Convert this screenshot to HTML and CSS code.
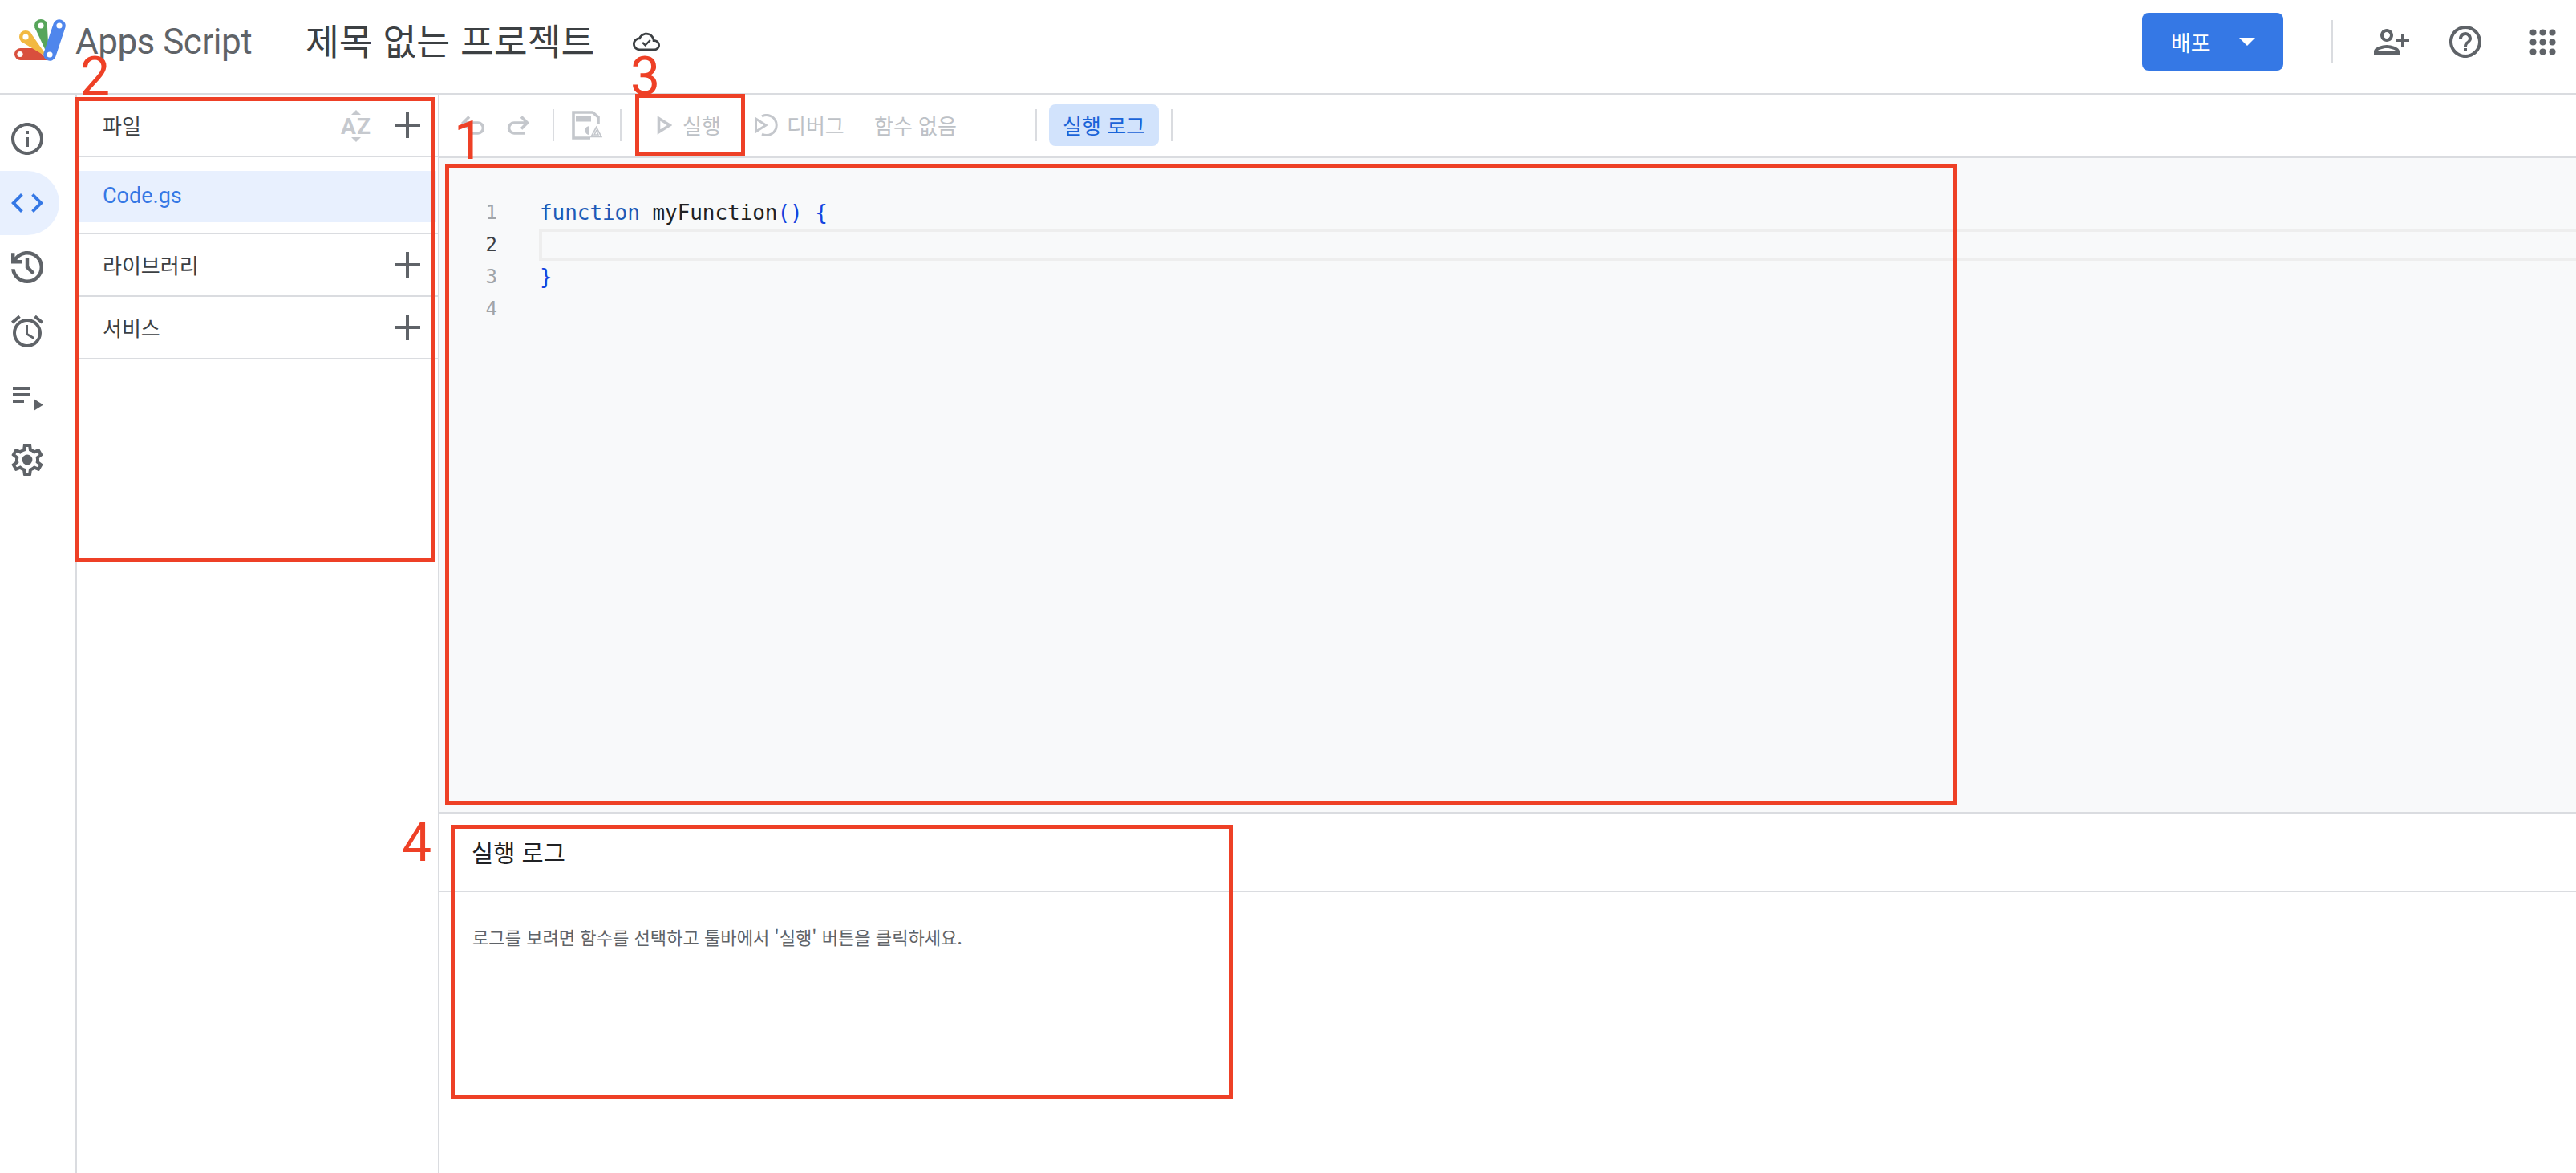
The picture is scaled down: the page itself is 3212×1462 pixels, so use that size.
FILE: index.html
```html
<!DOCTYPE html>
<html lang="ko">
<head>
<meta charset="utf-8">
<title>Apps Script</title>
<link rel="stylesheet" href="styles.css">
</head>
<body>
<div class="app">
  <header class="topbar">
    <svg class="logo" viewBox="18 24 64 52" aria-hidden="true">
      <circle cx="25.5" cy="67.5" r="7.5" fill="#d94f3d"/><polygon points="25.5,60 45,60 60,75 25.5,75" fill="#d94f3d"/>
      <circle cx="32" cy="46" r="8" fill="#f2b942"/><polygon points="26.3,51.7 37.7,40.3 60,72" fill="#f2b942"/>
      <circle cx="51" cy="32" r="8" fill="#57a55a"/><polygon points="43.2,33.8 58.8,30.2 61,72" fill="#57a55a"/>
      <line x1="74" y1="32" x2="62" y2="68" stroke="#4f86ec" stroke-width="15.5" stroke-linecap="round"/>
      <circle cx="25" cy="67.5" r="3.6" fill="#fff"/><circle cx="32" cy="46" r="3.6" fill="#fff"/><circle cx="51" cy="32" r="3.6" fill="#fff"/><circle cx="74" cy="32" r="3.6" fill="#fff"/><circle cx="62" cy="68" r="3.6" fill="#fff"/>
    </svg>
    <span class="brand">Apps Script</span>
    <span class="title">제목 없는 프로젝트</span>
    <svg class="cloud" viewBox="0 0 24 24" aria-hidden="true"><path class="fill" d="M19.35 10.04C18.67 6.59 15.64 4 12 4 9.11 4 6.6 5.64 5.35 8.04 2.34 8.36 0 10.91 0 14c0 3.31 2.69 6 6 6h13c2.76 0 5-2.24 5-5 0-2.64-2.05-4.78-4.65-4.96zM19 18H6c-2.21 0-4-1.79-4-4s1.79-4 4-4h.71C7.37 7.69 9.48 6 12 6c3.04 0 5.5 2.46 5.5 5.5v.5H19c1.66 0 3 1.34 3 3s-1.34 3-3 3z"/><path class="check" d="M8.6 12.6l2.4 2.4 4.4-4.4"/></svg>
    <div class="topbar-right">
      <button class="deploy"><span>배포</span><i class="caret"></i></button>
      <i class="top-sep"></i>
      <svg class="ic48 add-user" viewBox="0 0 24 24" aria-hidden="true"><path class="fill" d="M15 12c2.21 0 4-1.79 4-4s-1.79-4-4-4-4 1.79-4 4 1.79 4 4 4zm0-6c1.1 0 2 .9 2 2s-.9 2-2 2-2-.9-2-2 .9-2 2-2zm0 8c-2.67 0-8 1.34-8 4v2h16v-2c0-2.66-5.33-4-8-4zm-6 4c.22-.72 3.31-2 6-2 2.7 0 5.8 1.29 6 2H9zm-3-3v-3h3v-2H6V7H4v3H1v2h3v3h2z"/></svg>
      <svg class="ic48 help" viewBox="0 0 24 24" aria-hidden="true"><path class="fill" d="M11 18h2v-2h-2v2zm1-16C6.48 2 2 6.48 2 12s4.48 10 10 10 10-4.48 10-10S17.52 2 12 2zm0 18c-4.41 0-8-3.59-8-8s3.59-8 8-8 8 3.59 8 8-3.59 8-8 8zm0-14c-2.21 0-4 1.79-4 4h2c0-1.1.9-2 2-2s2 .9 2 2c0 2-3 1.75-3 5h2c0-2.25 3-2.5 3-5 0-2.21-1.79-4-4-4z"/></svg>
      <svg class="grid-ic" viewBox="0 0 33 33" aria-hidden="true"><g class="fill"><circle cx="4.5" cy="4.5" r="4"/><circle cx="16.5" cy="4.5" r="4"/><circle cx="28.5" cy="4.5" r="4"/><circle cx="4.5" cy="16.5" r="4"/><circle cx="16.5" cy="16.5" r="4"/><circle cx="28.5" cy="16.5" r="4"/><circle cx="4.5" cy="28.5" r="4"/><circle cx="16.5" cy="28.5" r="4"/><circle cx="28.5" cy="28.5" r="4"/></g></svg>
    </div>
  </header>

  <div class="body">
    <nav class="rail">
      <div class="rail-item"><svg class="ic48" viewBox="0 0 24 24" aria-hidden="true"><path class="fill" d="M11 7h2v2h-2zm0 4h2v6h-2zm1-9C6.48 2 2 6.48 2 12s4.48 10 10 10 10-4.48 10-10S17.52 2 12 2zm0 18c-4.41 0-8-3.59-8-8s3.59-8 8-8 8 3.59 8 8-3.59 8-8 8z"/></svg></div>
      <div class="rail-item is-active"><svg class="ic48" viewBox="0 0 24 24" aria-hidden="true"><path d="M9.4 16.6L4.8 12l4.6-4.6L8 6l-6 6 6 6 1.4-1.4zm5.2 0l4.6-4.6-4.6-4.6L16 6l6 6-6 6-1.4-1.4z"/></svg></div>
      <div class="rail-item"><svg class="ic40" viewBox="3 3 18 18" aria-hidden="true"><path class="fill" d="M12 21c-2.3 0-4.3-.76-6.03-2.29C4.24 17.18 3.25 15.27 3.05 13h2.05c.23 1.73 1 3.16 2.31 4.3C8.7 18.43 10.23 19 12 19c1.95 0 3.6-.68 4.96-2.04C18.32 15.6 19 13.95 19 12s-.68-3.6-2.04-4.96C15.6 5.68 13.95 5 12 5c-1.15 0-2.23.27-3.23.8-1 .53-1.85 1.27-2.52 2.2H9v2H3V4h2v2.35c.85-1.07 1.89-1.9 3.11-2.48C9.33 3.29 10.63 3 12 3c2.5 0 4.63.87 6.37 2.63C20.13 7.37 21 9.5 21 12s-.87 4.63-2.63 6.37C16.63 20.13 14.5 21 12 21zm2.8-4.8L11 12.4V7h2v4.6l3.2 3.2-1.4 1.4z"/></svg></div>
      <div class="rail-item"><svg class="ic48" viewBox="0 0 24 24" aria-hidden="true"><path class="fill" d="M22 5.72l-4.6-3.86-1.29 1.53 4.6 3.86L22 5.72zM7.88 3.39L6.6 1.86 2 5.71l1.29 1.53 4.59-3.85zM12.5 8H11v6l4.75 2.85.75-1.23-4-2.37V8zM12 4c-4.97 0-9 4.03-9 9s4.03 9 9 9 9-4.03 9-9-4.03-9-9-9zm0 16c-3.87 0-7-3.13-7-7s3.13-7 7-7 7 3.13 7 7-3.13 7-7 7z"/></svg></div>
      <div class="rail-item"><svg class="ic40" viewBox="0 0 40 40" aria-hidden="true"><g class="fill"><rect x="2" y="9" width="22" height="4"/><rect x="2" y="17" width="22" height="4"/><rect x="2" y="25" width="14" height="4"/><polygon points="28,24 40,31.5 28,39"/></g></svg></div>
      <div class="rail-item"><svg class="ic48" viewBox="0 0 24 24" aria-hidden="true"><path class="fill" d="M19.43 12.98c.04-.32.07-.64.07-.98 0-.34-.03-.66-.07-.98l2.11-1.65c.19-.15.24-.42.12-.64l-2-3.46c-.09-.16-.26-.25-.44-.25-.06 0-.12.01-.17.03l-2.49 1c-.52-.4-1.08-.73-1.69-.98l-.38-2.65C14.46 2.18 14.25 2 14 2h-4c-.25 0-.46.18-.49.42l-.38 2.65c-.61.25-1.17.59-1.69.98l-2.49-1c-.06-.02-.12-.03-.18-.03-.17 0-.34.09-.43.25l-2 3.46c-.13.22-.07.49.12.64l2.11 1.65c-.04.32-.07.65-.07.98 0 .33.03.66.07.98l-2.11 1.65c-.19.15-.24.42-.12.64l2 3.46c.09.16.26.25.44.25.06 0 .12-.01.17-.03l2.49-1c.52.4 1.08.73 1.69.98l.38 2.65c.03.24.24.42.49.42h4c.25 0 .46-.18.49-.42l.38-2.65c.61-.25 1.17-.59 1.69-.98l2.49 1c.06.02.12.03.18.03.17 0 .34-.09.43-.25l2-3.46c.12-.22.07-.49-.12-.64l-2.11-1.65zm-1.98-1.71c.04.31.05.52.05.73 0 .21-.02.43-.05.73l-.14 1.13.89.7 1.08.84-.7 1.21-1.27-.51-1.04-.42-.9.68c-.43.32-.84.56-1.25.73l-1.06.43-.16 1.13-.2 1.35h-1.4l-.19-1.35-.16-1.13-1.06-.43c-.43-.18-.83-.41-1.23-.71l-.91-.7-1.06.43-1.27.51-.7-1.21 1.08-.84.89-.7-.14-1.13c-.03-.31-.05-.54-.05-.74s.02-.43.05-.73l.14-1.13-.89-.7-1.08-.84.7-1.21 1.27.51 1.04.42.9-.68c.43-.32.84-.56 1.25-.73l1.06-.43.16-1.13.2-1.35h1.39l.19 1.35.16 1.13 1.06.43c.43.18.83.41 1.23.71l.91.7 1.06-.43 1.27-.51.7 1.21-1.07.85-.89.7.14 1.13z"/><circle class="fill" cx="12" cy="12" r="3.2"/></svg></div>
    </nav>

    <aside class="files">
      <div class="files-head">
        <span class="files-label">파일</span>
        <svg class="az" viewBox="0 0 40 40" aria-hidden="true"><polygon points="20,0 26,6 14,6"/><polygon points="20,40 26,34 14,34"/><text x="20" y="30" text-anchor="middle">AZ</text></svg>
        <svg class="plus" viewBox="0 0 32 32" aria-hidden="true"><path d="M14 0h4v14h14v4H18v14h-4V18H0v-4h14z"/></svg>
      </div>
      <div class="file-list"><div class="file-row">Code.gs</div></div>
      <div class="files-section">
        <span class="files-label">라이브러리</span>
        <svg class="plus" viewBox="0 0 32 32" aria-hidden="true"><path d="M14 0h4v14h14v4H18v14h-4V18H0v-4h14z"/></svg>
      </div>
      <div class="files-section">
        <span class="files-label">서비스</span>
        <svg class="plus" viewBox="0 0 32 32" aria-hidden="true"><path d="M14 0h4v14h14v4H18v14h-4V18H0v-4h14z"/></svg>
      </div>
    </aside>

    <main class="workspace">
      <div class="toolbar">
        <svg class="tb-undo" viewBox="0 0 30 26" aria-hidden="true"><path class="stroke" d="M4 10h18a6.5 6.5 0 0 1 0 13H11M11 2.5L3.5 10l7.5 7.5"/></svg>
        <svg class="tb-redo" viewBox="0 0 28 26" aria-hidden="true"><path class="stroke" d="M25 10H9a6.5 6.5 0 0 0 0 13h14M18 2.5l7.5 7.5-7.5 7.5"/></svg>
        <i class="tb-sep sep-a"></i>
        <svg class="tb-save" viewBox="0 0 38 36" aria-hidden="true"><path class="stroke" d="M23 34H2V2h24l7 6v9"/><rect class="disabled" x="5" y="6" width="19" height="7.5"/><path class="disabled" d="M22 19a5.5 5.5 0 0 0 0 11z"/><path class="tri" d="M30.5 20.5L37 32.5H24z"/><path class="tri" d="M30.5 25l2.5 5h-5z"/></svg>
        <i class="tb-sep sep-b"></i>
        <svg class="tb-run" viewBox="0 0 19 24" aria-hidden="true"><path class="stroke" d="M2.5 3.5L16 12 2.5 20.5z"/></svg>
        <span class="tb-text text-run">실행</span>
        <svg class="tb-debug" viewBox="0 0 31 28" aria-hidden="true"><path class="stroke thin" d="M2.5 6l12.5 8-12.5 8z"/><path class="stroke thin" d="M10 2.9a12.5 12.5 0 1 1 0 22.2"/></svg>
        <span class="tb-text text-debug">디버그</span>
        <span class="tb-text text-fn">함수 없음</span>
        <i class="tb-sep sep-c"></i>
        <button class="log-toggle">실행 로그</button>
        <i class="tb-sep sep-d"></i>
      </div>

      <div class="editor">
        <div class="line"><span class="num">1</span><code class="code"><span class="kw">function</span> myFunction<span class="br">()</span> <span class="br">{</span></code></div>
        <div class="line is-current"><span class="num">2</span><code class="code"></code></div>
        <div class="line"><span class="num">3</span><code class="code"><span class="br">}</span></code></div>
        <div class="line"><span class="num">4</span><code class="code"></code></div>
      </div>

      <section class="log">
        <div class="log-head">실행 로그</div>
        <p class="log-msg">로그를 보려면 함수를 선택하고 툴바에서 '실행' 버튼을 클릭하세요.</p>
      </section>
    </main>
  </div>
</div>

<div class="mark box-1"></div>
<div class="mark box-2"></div>
<div class="mark box-3"></div>
<div class="mark box-4"></div>
<span class="digit digit-1">1</span>
<span class="digit digit-2">2</span>
<span class="digit digit-3">3</span>
<span class="digit digit-4">4</span>
</body>
</html>
```

FILE: styles.css
```css
* { box-sizing: border-box; }
html, body { margin: 0; height: 100%; }
body {
  position: relative;
  width: 3212px;
  height: 1462px;
  overflow: hidden;
  background: #fff;
  color: #3c4043;
  font-family: "Noto Sans CJK KR", Roboto, sans-serif;
}
.app { display: flex; flex-direction: column; height: 1462px; }
.fill { fill: #5f6368; }

/* top bar */
.topbar {
  flex: 0 0 118px;
  display: flex;
  align-items: center;
  padding: 0 0 12px 18px;
  border-bottom: 2px solid #dadce0;
}
.logo { width: 64px; height: 52px; margin-top: -5px; }
.brand {
  margin-left: 12px;
  font: 400 44px/1 Roboto, sans-serif;
  letter-spacing: -0.5px;
  color: #5f6368;
  width: 219px;
  white-space: nowrap;
}
.title {
  margin-left: 68px;
  margin-top: -6px;
  font-size: 45.5px;
  line-height: 60px;
  width: 356px;
  white-space: nowrap;
  color: #3c4043;
}
.cloud { width: 34px; height: 34px; margin-left: 52px; }
.cloud .fill { fill: #3c4043; }
.check { fill: none; stroke: #3c4043; stroke-width: 1.7; }
.topbar-right { margin-left: auto; display: flex; align-items: center; }
.deploy {
  width: 176px;
  height: 72px;
  border: 0;
  border-radius: 8px;
  background: #3578e5;
  color: #fff;
  font: 400 27px/1 "Noto Sans CJK KR", sans-serif;
  display: flex;
  align-items: center;
  padding: 0 0 0 36px;
}
.caret {
  margin-left: 35px;
  width: 0;
  height: 0;
  border-left: 10px solid transparent;
  border-right: 10px solid transparent;
  border-top: 10px solid #fff;
}
.top-sep { width: 2px; height: 54px; margin-left: 60px; background: #dadce0; }
.ic48 { width: 48px; height: 48px; display: block; }
.ic40 { width: 40px; height: 40px; display: block; }
.add-user { transform: scaleX(-1); margin-left: 49px; }
.help { margin-left: 44px; }
.grid-ic { width: 33px; height: 33px; margin-left: 56px; margin-right: 25px; }

/* layout */
.body { flex: 1; display: flex; min-height: 0; }

/* left rail */
.rail {
  flex: 0 0 96px;
  border-right: 2px solid #dadce0;
  display: flex;
  flex-direction: column;
  padding-top: 15px;
}
.rail-item {
  height: 80px;
  flex: none;
  display: flex;
  align-items: center;
  justify-content: center;
  width: 68px;
  position: relative;
}
.rail-item.is-active { background: #e8f0fe; border-radius: 0 40px 40px 0; width: 74px; padding-right: 6px; }
.is-active path { fill: #3578e5; }

/* files */
.files { flex: 0 0 452px; border-right: 2px solid #dadce0; }
.files-head, .files-section {
  display: flex;
  align-items: center;
  padding: 0 22px 0 32px;
  border-bottom: 2px solid #dadce0;
}
.files-head { height: 78px; }
.files-section { height: 78px; }
.files-label { font-size: 26px; line-height: 36px; color: #3c4043; }
.az { width: 40px; height: 40px; margin-left: auto; margin-right: 28px; margin-top: 2px; }
.az polygon { fill: #c6c9ce; }
.az text { font: 700 28px Roboto, sans-serif; fill: #c6c9ce; letter-spacing: 1px; }
.plus { width: 32px; height: 32px; margin-left: auto; fill: #5f6368; }
.az + .plus { margin-left: 0; }
.file-list { height: 96px; padding-top: 17px; border-bottom: 2px solid #dadce0; }
.file-row {
  height: 64px;
  padding-left: 32px;
  margin-right: 2px;
  background: #e8f0fe;
  color: #3578e5;
  font: 400 27px/62px Roboto, sans-serif;
}

/* toolbar */
.workspace { flex: 1; display: flex; flex-direction: column; min-width: 0; }
.toolbar {
  flex: 0 0 79px;
  display: flex;
  align-items: center;
  padding: 0 0 1px 26px;
  border-bottom: 2px solid #dadce0;
}
.stroke { fill: none; stroke: #c4c7cc; stroke-width: 3.6; }
.stroke.thin { stroke-width: 3; }
.disabled { fill: #c4c7cc; }
.tri { fill: #fff; stroke: #c4c7cc; stroke-width: 1.6; }
.tb-undo { width: 30px; height: 26px; }
.tb-redo { width: 28px; height: 26px; margin-left: 28px; }
.tb-sep { flex: none; width: 2px; height: 40px; background: #dadce0; }
.sep-a { margin-left: 29px; }
.tb-save { width: 38px; height: 36px; margin-left: 22px; }
.sep-b { margin-left: 22px; }
.tb-run { width: 19px; height: 24px; margin-left: 44px; }
.tb-text { font-size: 26px; line-height: 36px; color: #bdc1c6; white-space: nowrap; }
.text-run { width: 48px; margin-left: 13px; }
.tb-debug { width: 31px; height: 28px; margin-left: 41px; }
.text-debug { width: 71px; margin-left: 10px; }
.text-fn { width: 103px; margin-left: 38px; }
.sep-c { margin-left: 98px; }
.log-toggle {
  width: 137px;
  height: 52px;
  margin-left: 15px;
  border: 0;
  border-radius: 8px;
  background: #d2e3fc;
  color: #1a63d8;
  padding: 0;
  font: 400 26px/1 "Noto Sans CJK KR", sans-serif;
  white-space: nowrap;
}
.sep-d { margin-left: 15px; }

/* editor */
.editor { flex: 1; min-height: 0; background: #f8f9fa; padding-top: 48px; }
.line { display: flex; height: 40px; font: 400 26px/40px "DejaVu Sans Mono", monospace; }
.num { flex: 0 0 72px; text-align: right; color: #a0a4a8; font-size: 24px; }
.code { flex: 1; margin-left: 52px; padding-left: 1px; font: inherit; color: #202124; white-space: pre; letter-spacing: -.05px; }
.is-current .num { color: #3c4043; }
.is-current .code { background: #f8f9fa; border: solid #eeeeee; border-width: 4px 0 4px 4px; }
.kw { color: #1d5bb8; }
.br { color: #1344e0; }

/* log */
.log { flex: 0 0 450px; border-top: 2px solid #dadce0; }
.log-head {
  height: 98px;
  padding-left: 40px;
  border-bottom: 2px solid #dadce0;
  font-size: 29.5px;
  line-height: 94px;
  color: #202124;
}
.log-msg { margin: 39px 0 0 41px; font-size: 22.1px; line-height: 32px; color: #5f6368; }

/* annotation overlay */
.mark { position: absolute; border: 5px solid #ee4026; }
.box-1 { left: 555px; top: 205px; width: 1885px; height: 798px; }
.box-2 { left: 94px; top: 121px; width: 448px; height: 579px; }
.box-3 { left: 792px; top: 117px; width: 137px; height: 78px; }
.box-4 { left: 562px; top: 1028px; width: 976px; height: 342px; }
.digit {
  position: absolute;
  font: 400 66px/66px Roboto, sans-serif;
  color: #ee4026;
}
.digit-1 { left: 566px; top: 143px; }
.digit-2 { left: 100px; top: 63px; }
.digit-3 { left: 786px; top: 63px; }
.digit-4 { left: 501px; top: 1018px; }
```
